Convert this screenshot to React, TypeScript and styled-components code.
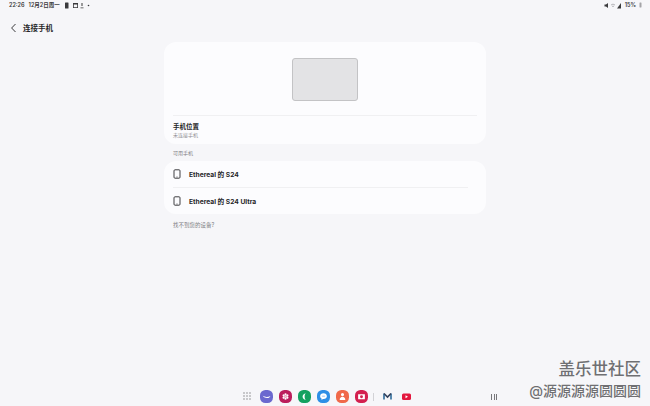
import type { ReactNode } from "react";
import { createGlobalStyle, styled } from "styled-components";

const GlobalStyle = createGlobalStyle`
  html, body {
    margin: 0;
    padding: 0;
    background: #f6f6f9;
  }
  body {
    font-family: "Inter", "Noto Sans CJK SC", sans-serif;
  }
`;

const Screen = styled.div`
  position: relative;
  width: 650px;
  height: 406px;
  overflow: hidden;
  display: flex;
  flex-direction: column;
  background: #f6f6f9;
  color: #1c1c1e;
`;

const StatusBar = styled.div`
  height: 10px;
  padding: 0 8px 0 9px;
  display: flex;
  align-items: center;
  justify-content: space-between;
  font-size: 5.5px;
  font-weight: 600;
  color: #3a3a3c;
`;

const StatusGroup = styled.div`
  display: flex;
  align-items: center;
  gap: 3px;
`;

const DateText = styled.span`
  margin-left: 1px;
  margin-right: 1px;
`;

const Header = styled.div`
  height: 35px;
  padding-left: 10px;
  display: flex;
  align-items: center;
  gap: 6px;
  font-size: 7.5px;
  font-weight: 700;
  color: #252527;
`;

const Main = styled.div`
  width: 322px;
  margin: -3px auto 0;
  display: flex;
  flex-direction: column;
`;

const Card = styled.div`
  background: #fcfcfe;
  border-radius: 12px;
`;

const PreviewArea = styled.div`
  height: 73px;
  padding-top: 16px;
  box-sizing: border-box;
  display: flex;
  justify-content: center;
`;

const PhonePreview = styled.div`
  width: 66px;
  height: 43px;
  box-sizing: border-box;
  background: #e3e3e5;
  border: 1.5px solid #c3c3c5;
  border-radius: 3px;
`;

const Divider = styled.div<{ $right: number }>`
  height: 1px;
  margin: 0 ${(props) => props.$right}px 0 9px;
  background: #f0f0f2;
`;

const LocationRow = styled.div`
  height: 28px;
  padding: 7px 9px 0;
  box-sizing: border-box;
`;

const LocationTitle = styled.div`
  font-size: 6.5px;
  line-height: 9px;
  font-weight: 700;
  color: #1c1c1e;
`;

const LocationSub = styled.div`
  font-size: 5px;
  line-height: 7px;
  color: #8e8e92;
`;

const Caption = styled.div`
  height: 17px;
  padding-left: 9px;
  display: flex;
  align-items: center;
  font-size: 5px;
  color: #808084;
`;

const DeviceRow = styled.div`
  height: 26px;
  padding-left: 8px;
  display: flex;
  align-items: center;
  gap: 7px;
  font-size: 6.7px;
  font-weight: 700;
  color: #252527;
`;

const HelpLink = styled.div`
  height: 22px;
  padding-left: 9px;
  display: flex;
  align-items: center;
  font-size: 5.5px;
  color: #808084;
`;

const Dock = styled.div`
  position: absolute;
  left: 243px;
  bottom: 3px;
  display: flex;
  align-items: center;
  gap: 6px;
`;

const AppsSlot = styled.div`
  margin-right: 2px;
  display: flex;
`;

const DockApp = styled.div<{ $color: string }>`
  width: 13px;
  height: 13px;
  border-radius: 42%;
  background: ${(props) => props.$color};
  display: flex;
  align-items: center;
  justify-content: center;
`;

const DockDivider = styled.div`
  width: 1px;
  height: 8px;
  margin: 0 1px 0 -1px;
  background: #d2d2d6;
`;

const GestureBar = styled.div`
  position: absolute;
  left: 491px;
  bottom: 6px;
  display: flex;
  gap: 1.5px;
`;

const GestureLine = styled.div`
  width: 1px;
  height: 6px;
  background: #77777b;
`;

const Watermark = styled.div`
  position: absolute;
  right: 9px;
  bottom: 7px;
  display: flex;
  flex-direction: column;
  align-items: flex-end;
  color: #6f6f72;
  font-weight: 500;
  text-shadow: 0 0 1px #fff;
`;

const WatermarkTitle = styled.div`
  font-size: 16.5px;
  line-height: 21px;
  margin-bottom: 3px;
`;

const WatermarkUser = styled.div`
  font-size: 14px;
  line-height: 16px;
`;

const PhoneIcon = () => (
  <svg width="10" height="10" viewBox="0 0 10 10" fill="none" stroke="#3f3f42" strokeWidth="1">
    <rect x="2" y="0.8" width="6" height="8.4" rx="1" />
    <path d="M4.4 8h1.2" strokeWidth="0.7" />
  </svg>
);

const BackIcon = () => (
  <svg width="7" height="10" viewBox="0 0 7 10" fill="none" stroke="#3a3a3c" strokeWidth="1">
    <path d="M5.5 1 1.6 5l3.900 4" />
  </svg>
);

const AppsGrid = () => (
  <svg width="9" height="9" viewBox="0 0 9 9" fill="#77777b">
    {[1, 4, 7].flatMap((y) =>
      [1, 4, 7].map((x) => <rect key={`${x}-${y}`} x={x - 0.6} y={y - 0.6} width="1.2" height="1.2" />)
    )}
  </svg>
);

const Glyph = ({ children }: { children: ReactNode }) => (
  <svg width="9" height="9" viewBox="0 0 8 8" fill="#fff" fillRule="evenodd">
    {children}
  </svg>
);

const petals = [0, 60, 120, 180, 240, 300];

const dockApps = [
  {
    color: "#6a68cf",
    glyph: <path d="M.6 3.400c2 1.300 4.800 1.300 6.800.2-.3.900-1 1.500-1.900 1.700-1.800.4-3.700-.3-4.900-1.900Z" />,
  },
  {
    color: "#bb1e5c",
    glyph: (
      <>
        {petals.map((angle) => (
          <circle key={angle} cx="4" cy="2.100" r="1" transform={`rotate(${angle} 4 4)`} />
        ))}
        <circle cx="4" cy="4" r="1.100" fill="#f7c8da" />
      </>
    ),
  },
  {
    color: "#14a160",
    glyph: <path d="M5.200 1C3.400 1.200 2.300 2.500 2.300 4s1.100 2.800 2.900 3c-.6-.4-1.100-1.500-1.100-3s.5-2.600 1.100-3Z" />,
  },
  {
    color: "#2d8fe6",
    glyph: (
      <path d="M4 1.200C2.200 1.200 1 2.300 1 3.800c0 1 .6 1.800 1.400 2.200L2.200 7l1.300-.7H4c1.800 0 3-1.100 3-2.500S5.800 1.200 4 1.200ZM2.600 3.400h.6v.7h-.6Zm1.100 0h.6v.7h-.6Zm1.100 0h.6v.7h-.6Z" />
    ),
  },
  {
    color: "#f0694a",
    glyph: <path d="M4 .9a1.400 1.400 0 1 1 0 2.800A1.400 1.400 0 0 1 4 .9ZM1.500 7c0-1.500 1-2.700 2.500-2.700S6.500 5.500 6.500 7Z" />,
  },
  {
    color: "#d3204f",
    glyph: <path d="M1 2h6v4.500H1Zm3 .9a1.300 1.300 0 1 0 0 2.600 1.300 1.300 0 0 0 0-2.600Z" />,
  },
];

export default function App() {
  return (
    <Screen>
      <GlobalStyle />
      <StatusBar>
        <StatusGroup>
          <span>22:26</span>
          <DateText>12月2日周一</DateText>
          <svg width="26" height="7" viewBox="0 0 26 7" fill="#3a3a3c">
            <rect x="1" y="0.500" width="3.500" height="6" rx="0.500" />
            <path d="M9 1h5v5H9Zm.8 1.500v2.700h3.400V2.500Z" fillRule="evenodd" />
            <path d="M17.500 1h1v3h-1Z M16.500 5.500h3v.8h-3Z" />
            <circle cx="24.500" cy="3.500" r="0.800" />
          </svg>
        </StatusGroup>
        <StatusGroup>
          <svg width="18" height="7" viewBox="0 0 18 7" fill="#3a3a3c">
            <path d="M0.500 2.500h1.500l2-1.500v5l-2-1.500H0.500Z" />
            <path d="M7 3a3 3 0 0 1 4 0M8 4.500a1.500 1.500 0 0 1 2 0" stroke="#8a8a8e" strokeWidth="0.600" fill="none" />
            <path d="M13 6.500 17 1v5.500Z" />
          </svg>
          <span>15%</span>
          <svg width="3" height="6" viewBox="0 0 3 6" fill="#a4a4a8">
            <rect x="0.500" y="0.500" width="2" height="5" rx="0.400" />
          </svg>
        </StatusGroup>
      </StatusBar>

      <Header>
        <BackIcon />
        <span>连接手机</span>
      </Header>

      <Main>
        <Card>
          <PreviewArea>
            <PhonePreview />
          </PreviewArea>
          <Divider $right={9} />
          <LocationRow>
            <LocationTitle>手机位置</LocationTitle>
            <LocationSub>未连接手机</LocationSub>
          </LocationRow>
        </Card>
        <Caption>可用手机</Caption>
        <Card>
          <DeviceRow>
            <PhoneIcon />
            <span>Ethereal 的 S24</span>
          </DeviceRow>
          <Divider $right={18} />
          <DeviceRow>
            <PhoneIcon />
            <span>Ethereal 的 S24 Ultra</span>
          </DeviceRow>
        </Card>
        <HelpLink>找不到您的设备?</HelpLink>
      </Main>

      <Dock>
        <AppsSlot>
          <AppsGrid />
        </AppsSlot>
        {dockApps.map((app) => (
          <DockApp key={app.color} $color={app.color}>
            <Glyph>{app.glyph}</Glyph>
          </DockApp>
        ))}
        <DockDivider />
        <svg width="13" height="13" viewBox="0 0 13 13" fill="none">
          <path d="M3 9.500V3.500" stroke="#2f6c9c" strokeWidth="1.600" />
          <path d="M10 9.500V3.500" stroke="#2f6c9c" strokeWidth="1.600" />
          <path d="M3 3.500 6.500 7 10 3.500" stroke="#33415c" strokeWidth="1.600" />
        </svg>
        <svg width="13" height="13" viewBox="0 0 13 13">
          <rect x="2" y="3.500" width="9" height="6.500" rx="1.500" fill="#e3173e" />
          <path d="M5.500 5.300v3L8 6.800Z" fill="#fff" />
        </svg>
      </Dock>

      <GestureBar>
        <GestureLine />
        <GestureLine />
        <GestureLine />
      </GestureBar>

      <Watermark>
        <WatermarkTitle>盖乐世社区</WatermarkTitle>
        <WatermarkUser>@源源源源圆圆圆</WatermarkUser>
      </Watermark>
    </Screen>
  );
}
